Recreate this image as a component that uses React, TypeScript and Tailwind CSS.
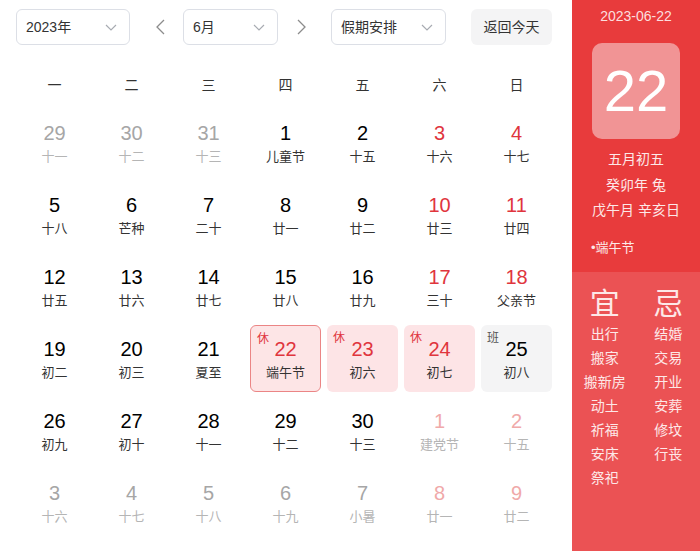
import React from "react";

type Cell = {
  d: number;
  l: string;
  kind: "prev" | "cur" | "next";
  red?: boolean;
  tag?: "休" | "班";
  box?: "today" | "holiday" | "work";
};

const c = (d: number, l: string, kind: Cell["kind"] = "cur", extra: Partial<Cell> = {}): Cell => ({
  d,
  l,
  kind,
  ...extra,
});

const rows: Cell[][] = [
  [
    c(29, "十一", "prev"),
    c(30, "十二", "prev"),
    c(31, "十三", "prev"),
    c(1, "儿童节"),
    c(2, "十五"),
    c(3, "十六", "cur", { red: true }),
    c(4, "十七", "cur", { red: true }),
  ],
  [
    c(5, "十八"),
    c(6, "芒种"),
    c(7, "二十"),
    c(8, "廿一"),
    c(9, "廿二"),
    c(10, "廿三", "cur", { red: true }),
    c(11, "廿四", "cur", { red: true }),
  ],
  [
    c(12, "廿五"),
    c(13, "廿六"),
    c(14, "廿七"),
    c(15, "廿八"),
    c(16, "廿九"),
    c(17, "三十", "cur", { red: true }),
    c(18, "父亲节", "cur", { red: true }),
  ],
  [
    c(19, "初二"),
    c(20, "初三"),
    c(21, "夏至"),
    c(22, "端午节", "cur", { red: true, tag: "休", box: "today" }),
    c(23, "初六", "cur", { red: true, tag: "休", box: "holiday" }),
    c(24, "初七", "cur", { red: true, tag: "休", box: "holiday" }),
    c(25, "初八", "cur", { tag: "班", box: "work" }),
  ],
  [
    c(26, "初九"),
    c(27, "初十"),
    c(28, "十一"),
    c(29, "十二"),
    c(30, "十三"),
    c(1, "建党节", "next", { red: true }),
    c(2, "十五", "next", { red: true }),
  ],
  [
    c(3, "十六", "next"),
    c(4, "十七", "next"),
    c(5, "十八", "next"),
    c(6, "十九", "next"),
    c(7, "小暑", "next"),
    c(8, "廿一", "next", { red: true }),
    c(9, "廿二", "next", { red: true }),
  ],
];

const weekdays = ["一", "二", "三", "四", "五", "六", "日"];
const yi = ["出行", "搬家", "搬新房", "动土", "祈福", "安床", "祭祀"];
const ji = ["结婚", "交易", "开业", "安葬", "修坟", "行丧"];

const ChevronDown = () => (
  <svg width="12" height="7" viewBox="0 0 12 7" fill="none">
    <path d="M1 1l5 5 5-5" stroke="#a8abb2" strokeWidth="1.2" />
  </svg>
);

const Select = ({ label, width }: { label: string; width: string }) => (
  <div
    className={`${width} flex h-9 items-center justify-between rounded-md border border-[#dcdfe6] bg-white pl-[9px] pr-[12px] text-[14px] text-[#333]`}
  >
    <span>{label}</span>
    <ChevronDown />
  </div>
);

const Arrow = ({ dir }: { dir: "left" | "right" }) => (
  <div
    className={`flex w-[53px] items-center justify-center ${dir === "left" ? "pl-[7px]" : "pr-[7px]"}`}
  >
    <svg width="9" height="16" viewBox="0 0 9 16" fill="none">
      <path
        d={dir === "left" ? "M8 1L1 8l7 7" : "M1 1l7 7-7 7"}
        stroke="#8c8c8c"
        strokeWidth="1.3"
      />
    </svg>
  </div>
);

const DayCell = ({ cell }: { cell: Cell }) => {
  let numColor = "text-black";
  let lunarColor = "text-[#333]";
  if (cell.kind !== "cur") {
    numColor = cell.red ? "text-[#f0a9a9]" : "text-[#a6a6a6]";
    lunarColor = "text-[#b5b5b5]";
  } else if (cell.red) {
    numColor = "text-[#e0353d]";
  }
  let boxCls = "";
  if (cell.box === "today") boxCls = "bg-[#fde5e6] border-[1.5px] border-[#eb8585]";
  if (cell.box === "holiday") boxCls = "bg-[#fde4e6]";
  if (cell.box === "work") boxCls = "bg-[#f4f4f5]";
  return (
    <div className="h-[72px] w-[77px] px-[3px] py-[2.5px]">
      <div
        className={`relative flex h-full w-full flex-col items-center justify-center rounded-md pt-[5px] ${boxCls}`}
      >
        {cell.tag && (
          <span
            className={`absolute left-[6px] top-[7px] text-[12px] leading-none ${
              cell.tag === "休" ? "text-[#e0353d]" : "text-[#555]"
            }`}
          >
            {cell.tag}
          </span>
        )}
        <span className={`text-[20px] leading-6 ${numColor}`}>{cell.d}</span>
        <span className={`text-[13px] leading-6 ${lunarColor}`}>{cell.l}</span>
      </div>
    </div>
  );
};

export default function App() {
  return (
    <div
      className="flex h-[551px] w-[700px] overflow-hidden bg-white"
      style={{ fontFamily: '"Liberation Sans", "Noto Sans CJK SC", sans-serif' }}
    >
      <div className="w-[572px] pl-4 pt-[9px]">
        <div className="flex h-9 items-center">
          <Select label="2023年" width="w-[114px]" />
          <Arrow dir="left" />
          <Select label="6月" width="w-[95px]" />
          <Arrow dir="right" />
          <Select label="假期安排" width="w-[115px]" />
          <div className="ml-[25px] flex h-9 w-[81px] items-center justify-center rounded-md bg-[#f4f4f5] text-[14px] text-[#333]">
            返回今天
          </div>
        </div>
        <div className="mt-[28px] flex">
          {weekdays.map((w) => (
            <div key={w} className="w-[77px] text-center text-[14px] leading-6 text-[#333]">
              {w}
            </div>
          ))}
        </div>
        <div className="mt-[9px] flex flex-col">
          {rows.map((row, i) => (
            <div key={i} className="flex">
              {row.map((cell, j) => (
                <DayCell key={j} cell={cell} />
              ))}
            </div>
          ))}
        </div>
      </div>

      <div className="flex w-[128px] flex-col">
        <div className="flex h-[272px] flex-col items-center bg-[#e83b3c] text-[#fde8e8]">
          <div className="pt-[7px] text-[14px] leading-[18px] text-[#fcdede]">2023-06-22</div>
          <div className="mt-[18px] flex h-[96px] w-[88px] items-center justify-center rounded-[10px] bg-[#f19495] text-[58px] leading-none text-white">
            22
          </div>
          <div className="mt-[8px] flex flex-col items-center text-[14px] leading-[25.5px]">
            <span>五月初五</span>
            <span>癸卯年 兔</span>
            <span>戊午月 辛亥日</span>
          </div>
          <div className="mt-[12px] w-full pl-[19px] text-[13px] leading-6">•端午节</div>
        </div>
        <div className="flex flex-1 bg-[#eb5254] pl-px pt-[14px] text-[#fde8e8]">
          <div className="flex w-[68px] flex-col items-center">
            <span className="text-[30px] leading-9">宜</span>
            {yi.map((t) => (
              <span key={t} className="text-[14px] leading-6">
                {t}
              </span>
            ))}
          </div>
          <div className="flex w-[68px] flex-col items-center">
            <span className="text-[30px] leading-9">忌</span>
            {ji.map((t) => (
              <span key={t} className="text-[14px] leading-6">
                {t}
              </span>
            ))}
          </div>
        </div>
      </div>
    </div>
  );
}
